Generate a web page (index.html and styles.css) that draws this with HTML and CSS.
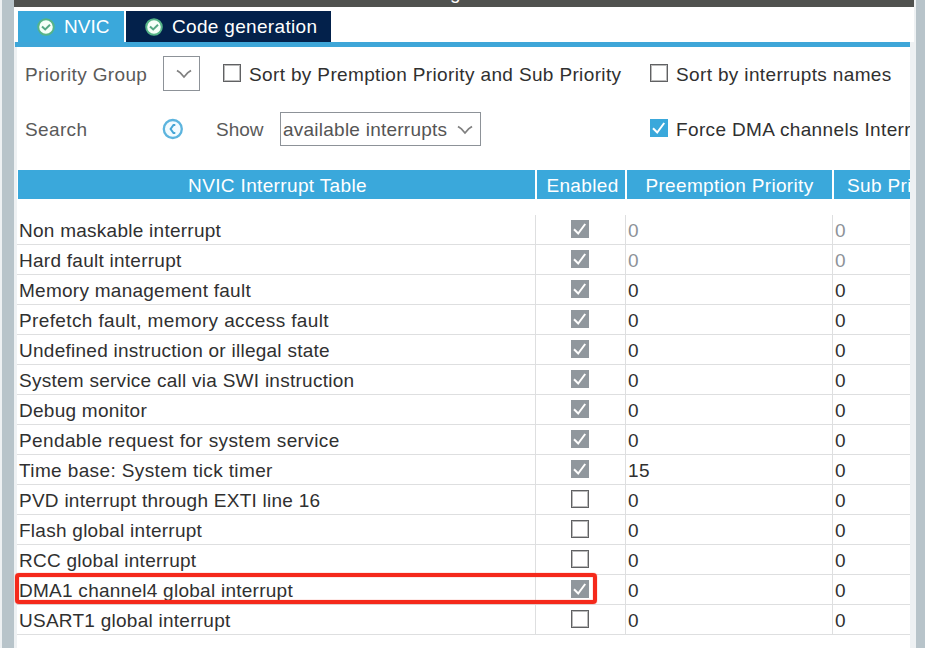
FILE: index.html
```html
<!DOCTYPE html>
<html lang="en">
<head>
<meta charset="utf-8">
<title>NVIC Configuration</title>
<link rel="stylesheet" href="styles.css">
</head>
<body>
<svg class="defs" width="0" height="0">
  <symbol id="ok" viewBox="0 0 18 18"><circle cx="9" cy="9" r="7.8" fill="#f4fff8" stroke="#55b488" stroke-width="2"/><path d="M5 8.4l3.2 3 4.8-4.6" fill="none" stroke="#55a884" stroke-width="2"/></symbol>
  <symbol id="tick" viewBox="0 0 18 18"><path d="M3 9.2l4.2 4.3L14.2 4" fill="none" stroke="#fff" stroke-width="2"/></symbol>
  <symbol id="chev" viewBox="0 0 16 10"><path d="M1 1.5l3.4 2.4L8 8l3.6-4.1L15 1.5" fill="none" stroke="#808080" stroke-width="1.7"/></symbol>
</svg>
<div class="window">
  <div class="titlebar"><span>Configuration</span></div>
  <div class="tabs">
    <div class="tab active"><svg class="ok"><use href="#ok"/></svg><span>NVIC</span></div>
    <div class="tab code"><svg class="ok"><use href="#ok"/></svg><span>Code generation</span></div>
  </div>
  <div class="content">
    <div class="options">
      <span class="muted">Priority Group</span>
      <div class="select small"><svg class="chev"><use href="#chev"/></svg></div>
      <label class="check sort"><i class="box"></i><span>Sort by Premption Priority and Sub Priority</span></label>
      <label class="check"><i class="box"></i><span>Sort by interrupts names</span></label>
    </div>
    <div class="options second">
      <span class="muted">Search</span>
      <svg class="back" viewBox="0 0 22 22"><circle cx="10.8" cy="11" r="9" fill="#f2fbff" stroke="#5cb4de" stroke-width="2.3"/><path d="M13.3 7h-1.8L8.6 11l2.9 4h1.8" fill="none" stroke="#45a6d6" stroke-width="2"/></svg>
      <span class="muted show">Show</span>
      <div class="select wide"><span>available interrupts</span><svg class="chev"><use href="#chev"/></svg></div>
      <label class="check force"><i class="box on"><svg><use href="#tick"/></svg></i><span>Force DMA channels Interr</span></label>
    </div>
    <div class="grid head"><div>NVIC Interrupt Table</div><div>Enabled</div><div>Preemption Priority</div><div class="sub">Sub Priority</div></div>
    <div class="rows" id="rows"></div>
  </div>
</div>
<script src="table.js"></script>
</body>
</html>
```
FILE: table.js
```js
const interrupts = [
  ["Non maskable interrupt", "locked", 0],
  ["Hard fault interrupt", "locked", 0],
  ["Memory management fault", "on", 0],
  ["Prefetch fault, memory access fault", "on", 0, "loose"],
  ["Undefined instruction or illegal state", "on", 0],
  ["System service call via SWI instruction", "on", 0],
  ["Debug monitor", "on", 0],
  ["Pendable request for system service", "on", 0, "loose"],
  ["Time base: System tick timer", "on", 15, "loose"],
  ["PVD interrupt through EXTI line 16", "off", 0],
  ["Flash global interrupt", "off", 0],
  ["RCC global interrupt", "off", 0],
  ["DMA1 channel4 global interrupt", "on", 0, "marked"],
  ["USART1 global interrupt", "off", 0]
];
document.getElementById("rows").innerHTML = interrupts.map(([name, state, priority, style]) => {
  const box = state === "off" ? '<i class="box"></i>' : '<i class="box fixed"><svg><use href="#tick"/></svg></i>';
  return `<div class="grid row ${state} ${style || ""}"><div>${name}</div><div>${box}</div><div>${priority}</div><div>0</div></div>`;
}).join("");
```
FILE: styles.css
```css
*, *::before, *::after { box-sizing: border-box; }
body {
  margin: 0;
  height: 648px;
  overflow: hidden;
  background: #eef1f3;
  font: 19px/22px "Liberation Sans", Arial, sans-serif;
  letter-spacing: 0.26px;
  color: #303030;
  white-space: nowrap;
}
.defs { position: absolute; }
svg { display: block; flex: none; }
.window {
  height: 648px;
  margin-left: 2px;
  border-left: 12px solid #b8c4ca;
  border-right: 9px solid #b8c4ca;
}
.titlebar {
  width: 900px;
  height: 7px;
  background: #50524f;
  color: #fff;
  text-align: center;
  overflow: hidden;
}
.titlebar span { display: block; margin: -18px 0 0 -3px; }
.tabs {
  display: flex;
  gap: 2px;
  width: 900px;
  height: 35px;
  padding: 4px 0 0 4px;
  background: #fff;
}
.tab { display: flex; color: #fff; height: 31px; padding-top: 5px; }
.active { width: 106px; padding-left: 19px; background: #3aa8db; letter-spacing: 0; }
.code { width: 205px; padding-left: 19px; background: #03214b; letter-spacing: 0.32px; }
.ok { width: 18px; height: 18px; margin: 2px 9px 0 0; }
.content {
  width: 896px;
  height: 606px;
  background: #fff;
  border-left: 3px solid #eef1f3;
}
.content::before {
  content: "";
  display: block;
  height: 5px;
  margin-left: -2px;
  background: #3ea6d8;
}
.options { display: flex; align-items: center; height: 54px; padding-left: 8px; overflow: hidden; letter-spacing: 0.36px; }
.options > * { flex: none; }
.options span { padding-top: 1px; }
.muted { width: 138px; color: #5a5a5a; }
.select { display: flex; align-items: center; border: 1px solid #8d9298; color: #555; }
.small { width: 37px; height: 35px; padding-left: 12px; margin: -2px 23px 0 0; }
.chev { width: 16px; height: 10px; margin-top: 1px; }
.check { display: flex; align-items: center; }
.sort { width: 427px; }
.box { display: block; width: 18px; height: 18px; border: 1.5px solid #606163; background: #fff; flex: none; box-shadow: inset 0 0 0 1px #bbb; }
.check .box { margin: -2px 8px 0 0; }
.box svg { width: 18px; height: 18px; }
.on.box, .fixed { border: 0; box-shadow: none; background: #3aa8db; }
.fixed { background: #90979d; }
.second { height: 56px; }
.back { width: 22px; height: 22px; margin: -1px 32px 0 -1px; }
.show { width: 64px; letter-spacing: 0; }
.wide { width: 201px; height: 34px; padding-left: 2px; margin-right: 169px; letter-spacing: 0.24px; }
.wide .chev { margin-left: 10px; }
.grid { display: grid; grid-template-columns: 519px 90px 207px 77px; }
.head { grid-template-columns: 520px 90px 207px 76px; height: 29px; margin-top: 13px; color: #fff; line-height: 31px; text-align: center; overflow: hidden; letter-spacing: 0.35px; }
.head div { height: 29px; background: #3aa8db; margin-right: 2px; }
.head div:first-child { margin-left: 1px; padding-left: 2px; }
.head div:nth-child(2) { padding-left: 3px; }
.head .sub { margin: 0; padding-left: 13px; text-align: left; overflow: hidden; }
.rows { padding-top: 16px; }
.row { position: relative; height: 30px; line-height: 31px; border-bottom: 1px solid #dedfe0; }
.row div { border-right: 1px solid #dedfe0; padding-left: 2px; height: 30px; }
.row div:last-child { border: 0; }
.row div:nth-child(2) { padding: 5px 0 0 35px; }
.loose { letter-spacing: 0.38px; }
.locked div:nth-child(n+3) { color: #8d9298; }
.marked::after {
  content: "";
  position: absolute;
  z-index: 1;
  left: -2px;
  top: -2px;
  width: 582px;
  height: 31px;
  border: 4px solid #f5291b;
  border-radius: 4px;
  box-shadow: 0 0 1px #f5291b, inset 0 0 1px #f5291b;
}
```
